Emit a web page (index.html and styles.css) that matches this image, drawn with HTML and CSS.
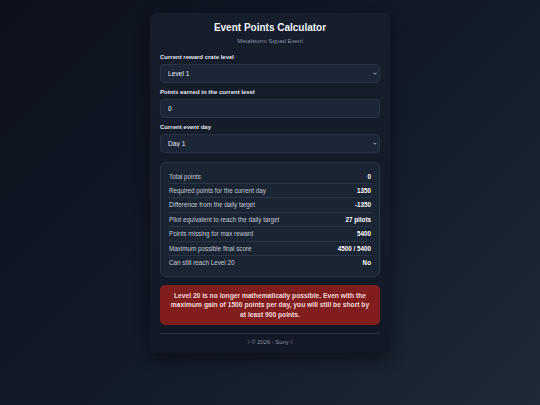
FILE: index.html
```html
<!DOCTYPE html>
<html lang="en">

<head>
    <meta charset="UTF-8">
    <meta name="viewport" content="width=device-width, initial-scale=1.0">
    <title>Event Points Calculator</title>
    <link rel="stylesheet" href="styles.css">
</head>

<body>

    <div class="container calc">
        <h1>Event Points Calculator</h1>
        <p class="subtitle">Metalstorm Squad Event</p>

        <div class="field">
            <label for="crateLevel" class="form-label">Current reward crate level</label>
            <div class="select-wrap">
                <select id="crateLevel" class="form-control">
                    <option>Level 1</option>
                </select>
                <svg class="chevron" viewBox="0 0 8 5" width="4" height="3"><path d="M1 1l3 3 3-3" fill="none" stroke="#cbd5e1" stroke-width="1.6"/></svg>
            </div>
        </div>

        <div class="field">
            <label for="pointsEarned" class="form-label">Points earned in the current level</label>
            <input type="text" id="pointsEarned" class="form-control" value="0">
        </div>

        <div class="field">
            <label for="eventDay" class="form-label">Current event day</label>
            <div class="select-wrap">
                <select id="eventDay" class="form-control">
                    <option>Day 1</option>
                </select>
                <svg class="chevron" viewBox="0 0 8 5" width="4" height="3"><path d="M1 1l3 3 3-3" fill="none" stroke="#cbd5e1" stroke-width="1.6"/></svg>
            </div>
        </div>

        <div class="results">
            <div class="row"><span>Total points</span><b>0</b></div>
            <div class="row"><span>Required points for the current day</span><b>1350</b></div>
            <div class="row"><span>Difference from the daily target</span><b>-1350</b></div>
            <div class="row"><span>Pilot equivalent to reach the daily target</span><b>27 pilots</b></div>
            <div class="row"><span>Points missing for max reward</span><b>5400</b></div>
            <div class="row"><span>Maximum possible final score</span><b>4500 / 5400</b></div>
            <div class="row"><span>Can still reach Level 20</span><b>No</b></div>
        </div>

        <div class="alert">
            Level 20 is no longer mathematically possible. Even with the maximum gain of 1500 points per day, you will still be short by at least 900 points.
        </div>

        <footer class="footer">☽ © 2026 - Suny ☾</footer>
    </div>

</body>
</html>
```

FILE: styles.css
```css
html, body {
    margin: 0;
    min-height: 100%;
}

body {
    font-family: "Liberation Sans", Arial, sans-serif;
    background: linear-gradient(135deg, #0c111c 0%, #121a28 50%, #1f2937 100%);
    min-height: 405px;
    padding-top: 13px;
    box-sizing: border-box;
}

.container.calc {
    width: 240px;
    margin: 0 auto;
    padding: 8px 10px 7px;
    box-sizing: border-box;
    background: linear-gradient(180deg, #161d2b 0%, #121826 100%);
    border-radius: 7px;
    box-shadow: 0 6px 16px rgba(0, 0, 0, 0.45);
}

h1 {
    margin: 0;
    font-size: 10px;
    line-height: 14px;
    text-align: center;
    color: #f1f5f9;
}

.subtitle {
    margin: 2px 0 8px;
    font-size: 6px;
    line-height: 8px;
    text-align: center;
    color: #8793a6;
}

.field {
    margin-bottom: 5.5px;
}

.form-label {
    display: block;
    margin-bottom: 2px;
    font-size: 6px;
    line-height: 9px;
    font-weight: bold;
    color: #e5e9f0;
}

.select-wrap {
    position: relative;
}

.form-control {
    display: block;
    width: 100%;
    height: 18.5px;
    box-sizing: border-box;
    padding: 0 7px;
    font-family: inherit;
    font-size: 6.7px;
    color: #e2e8f0;
    background-color: #1d2636;
    border: 1px solid #273246;
    border-radius: 4px;
    outline: 0;
    appearance: none;
    -webkit-appearance: none;
}

.chevron {
    position: absolute;
    right: 3px;
    top: 8px;
}

.results {
    margin-top: 9px;
    padding: 7px 8px;
    background-color: #1b2433;
    border: 1px solid #2c3749;
    border-radius: 6px;
}

.row {
    display: flex;
    justify-content: space-between;
    font-size: 6.3px;
    line-height: 13.4px;
    color: #c3cad6;
    border-bottom: 1px solid #2b3547;
}

.row:last-child {
    border-bottom: none;
}

.row b {
    color: #ffffff;
}

.alert {
    margin-top: 8px;
    padding: 5.5px 8px;
    background-color: #801e1e;
    border-radius: 5px;
    font-size: 6.7px;
    line-height: 9.5px;
    font-weight: bold;
    text-align: center;
    color: #f5dada;
}

.footer {
    margin-top: 8px;
    padding-top: 4px;
    border-top: 1px solid #263043;
    font-size: 5.8px;
    line-height: 8px;
    text-align: center;
    color: #8a94a6;
}
```
